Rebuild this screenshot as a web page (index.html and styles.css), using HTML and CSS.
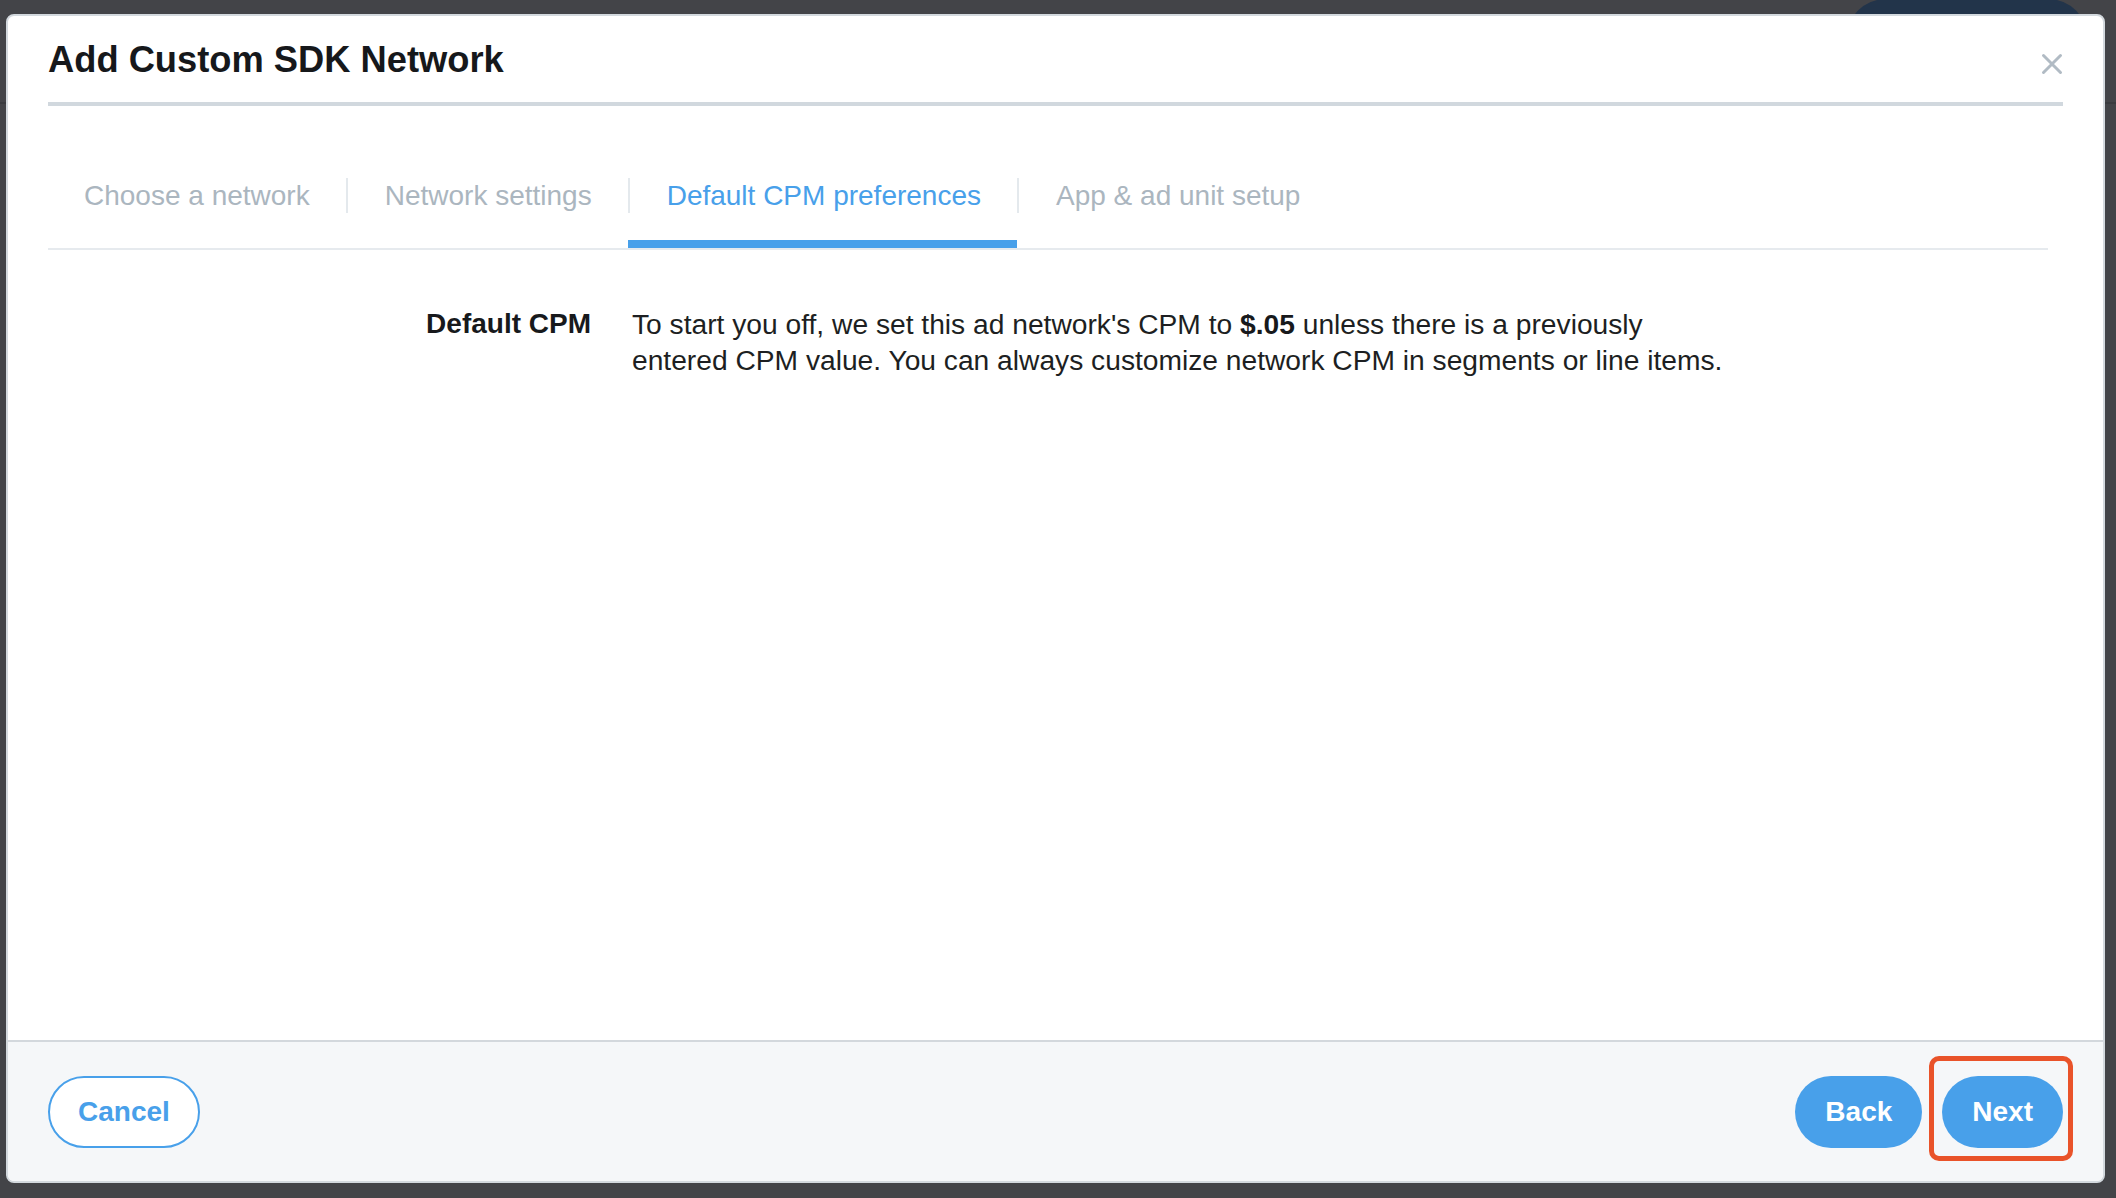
FILE: index.html
```html
<!DOCTYPE html>
<html lang="en">
<head>
<meta charset="utf-8">
<title>Add Custom SDK Network</title>
<link rel="stylesheet" href="styles.css">
</head>
<body>
  <div class="page">
    <div class="page-bar">
      <div class="page-btn"></div>
    </div>
  </div>

  <div class="modal" role="dialog" aria-labelledby="modal-title">
    <div class="modal-head">
      <h1 class="modal-title" id="modal-title">Add Custom SDK Network</h1>
      <button class="close" aria-label="Close">
        <svg width="22" height="22" viewBox="0 0 22 22" aria-hidden="true">
          <path d="M2.5 2.5 L19.5 19.5 M19.5 2.5 L2.5 19.5" stroke="#b1bbc4" stroke-width="3" stroke-linecap="round" fill="none"/>
        </svg>
      </button>
    </div>

    <nav class="steps">
      <div class="step"><span class="step-label">Choose a network</span></div>
      <div class="step"><span class="step-label">Network settings</span></div>
      <div class="step active"><span class="step-label">Default CPM preferences</span></div>
      <div class="step"><span class="step-label">App &amp; ad unit setup</span></div>
    </nav>

    <div class="modal-body">
      <div class="field">
        <div class="field-label">Default CPM</div>
        <p class="field-text">To start you off, we set this ad network's CPM to <b class="amount">$.05</b> unless there is a previously entered CPM value. You can always customize network CPM in segments or line items.</p>
      </div>
    </div>

    <div class="modal-foot">
      <button class="btn btn-outline">Cancel</button>
      <div class="foot-right">
        <button class="btn btn-primary">Back</button>
        <span class="highlight-wrap">
          <button class="btn btn-primary">Next</button>
          <span class="highlight"></span>
        </span>
      </div>
    </div>
  </div>
</body>
</html>
```

FILE: styles.css
```css
* {
  box-sizing: border-box;
}

html, body {
  margin: 0;
  padding: 0;
}

body {
  width: 2116px;
  height: 1198px;
  overflow: hidden;
  background: #434448;
  font-family: "Liberation Sans", Arial, Helvetica, sans-serif;
  position: relative;
}

/* page behind the overlay */
.page-bar {
  height: 104px;
  border-bottom: 2px solid #3a3b3f;
  display: flex;
  justify-content: flex-end;
  overflow: hidden;
}

.page-btn {
  width: 242px;
  height: 80px;
  margin-top: -1px;
  margin-right: 28px;
  border-radius: 40px;
  background: #22344a;
}

/* modal */
.modal {
  position: absolute;
  left: 6px;
  top: 14px;
  width: 2099px;
  height: 1169px;
  background: #ffffff;
  border: 2px solid #d3d9de;
  border-radius: 8px;
  overflow: hidden;
  display: flex;
  flex-direction: column;
}

.modal-head {
  margin: 0 40px;
  padding: 22px 0 20px;
  border-bottom: 4px solid #d1d8de;
  display: flex;
  justify-content: space-between;
  align-items: center;
}

.modal-title {
  margin: 0;
  font-size: 36.3px;
  line-height: 44px;
  font-weight: 700;
  color: #16181b;
}

.close {
  margin: 7px 0 0;
  padding: 0;
  width: 22px;
  height: 22px;
  border: 0;
  background: none;
  display: flex;
}

/* steps */
.steps {
  margin: 72px 55px 0 40px;
  display: flex;
  border-bottom: 2px solid #e6eaee;
}

.step {
  padding-bottom: 27px;
  border-bottom: 8px solid transparent;
}

.step.active {
  border-bottom-color: #48a0ea;
}

.step-label {
  display: block;
  font-size: 28px;
  line-height: 35px;
  color: #abb6bf;
  padding: 0 36px 0 37px;
  border-left: 2px solid #e4e9ed;
  white-space: nowrap;
}

.step:first-child .step-label {
  border-left: 0;
  padding-left: 36px;
}

.step.active .step-label {
  color: #48a0ea;
}

/* body */
.modal-body {
  flex: 1;
  padding-top: 56px;
}

.field {
  margin-left: 40px;
  display: grid;
  grid-template-columns: 543px 1110px;
  column-gap: 41px;
}

.field-label {
  text-align: right;
  font-size: 28px;
  line-height: 36px;
  font-weight: 700;
  color: #17191c;
}

.field-text {
  margin: 0;
  font-size: 28.2px;
  line-height: 36px;
  color: #1d1f22;
}

.amount {
  font-weight: 700;
  color: #17191c;
}

/* footer */
.modal-foot {
  border-top: 2px solid #d3d8dd;
  background: #f5f7f9;
  padding: 34px 40px 33px;
  display: flex;
  justify-content: space-between;
  align-items: center;
}

.foot-right {
  display: flex;
  gap: 20px;
}

.btn {
  height: 72px;
  border-radius: 36px;
  padding: 0 30px;
  border: 0;
  font-family: "Liberation Sans", Arial, Helvetica, sans-serif;
  font-size: 28px;
  font-weight: 700;
  line-height: 1;
  cursor: pointer;
}

.btn-outline {
  background: #ffffff;
  color: #48a0ea;
  border: 2px solid #48a0ea;
  padding: 0 28px;
}

.btn-primary {
  background: #48a0ea;
  color: #ffffff;
}

.highlight-wrap {
  position: relative;
  display: inline-flex;
}

.highlight {
  position: absolute;
  left: -13px;
  right: -10px;
  top: -20px;
  bottom: -13px;
  border: 5px solid #e9532a;
  border-radius: 10px;
  pointer-events: none;
}
```
